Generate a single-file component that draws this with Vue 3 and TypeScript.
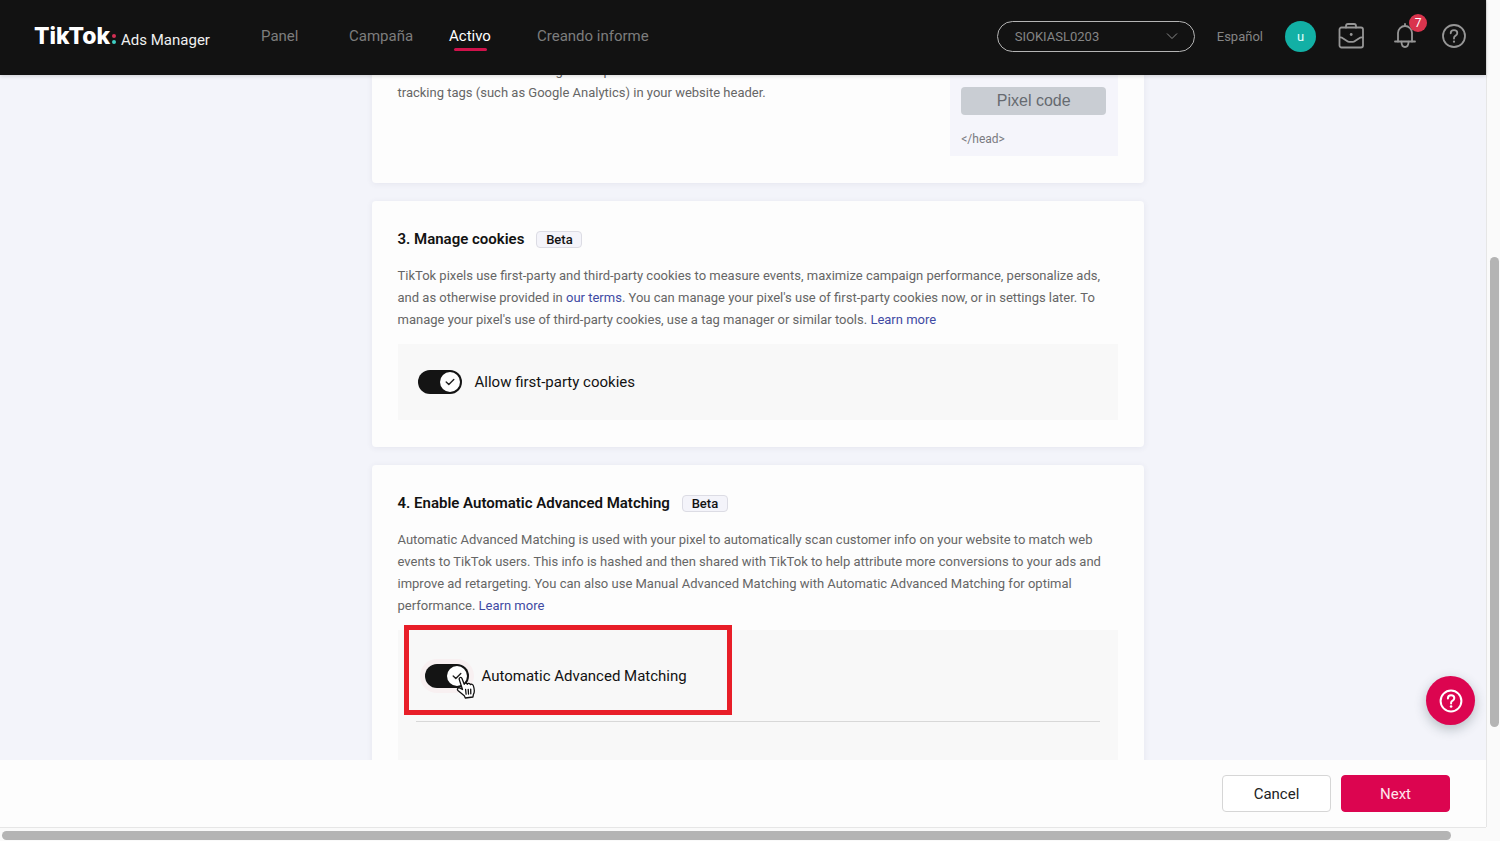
<script setup lang="ts">
import { ref } from 'vue'

interface NavItem {
  label: string
  active?: boolean
}

const nav: NavItem[] = [
  { label: 'Panel' },
  { label: 'Campaña' },
  { label: 'Activo', active: true },
  { label: 'Creando informe' },
]

const account = ref('SIOKIASL0203')
const notifications = ref(7)
const firstParty = ref(true)
const advancedMatching = ref(true)
</script>

<template>
  <div class="window">
    <div class="page">
      <header class="topbar">
        <a class="brand" href="#">
          <span class="brand-name">TikTok</span>
          <span class="brand-dots"><i class="dot red"></i><i class="dot teal"></i></span>
          <span class="brand-sub">Ads Manager</span>
        </a>
        <nav class="nav">
          <a v-for="item in nav" :key="item.label" href="#" :class="{ active: item.active }">{{ item.label }}</a>
        </nav>
        <div class="tools">
          <div class="account">
            <select v-model="account" aria-label="Account">
              <option>SIOKIASL0203</option>
            </select>
            <svg class="chevron" width="12" height="8" viewBox="0 0 12 8" fill="none" stroke="#8a8a8a" stroke-width="1">
              <path d="M1 1.5l5 5 5-5" />
            </svg>
          </div>
          <button class="lang" type="button">Español</button>
          <button class="avatar" type="button">u</button>
          <button class="icon" type="button" aria-label="Business">
            <svg width="26" height="26" viewBox="0 0 26 26" fill="none" stroke="#969696" stroke-width="1.8" stroke-linejoin="round" stroke-linecap="round">
              <rect x="1.500" y="4.500" width="23.500" height="20" rx="2" />
              <path d="M8 4.500V3q0-2 2-2h6q2 0 2 2v1.500" />
              <path d="M1.800 14.500q1.700-.3 3.400 1l3.800 2.600q1 .7 2.200.7h3.600q1.200 0 2.200-.7l3.800-2.600q1.700-1.300 3.800-1" />
              <circle cx="13.200" cy="11.500" r="1.400" fill="#969696" stroke="none" />
            </svg>
          </button>
          <button class="icon bell" type="button" aria-label="Notifications">
            <svg width="30" height="26" viewBox="0 0 30 26" fill="none" stroke="#969696" stroke-width="1.800" stroke-linejoin="round" stroke-linecap="round">
              <path d="M15 1v2" />
              <path d="M8 18.500V10a7 7 0 0 1 14 0v8.500" />
              <path d="M5 18.500h20" />
              <path d="M11.500 18.700q0 5.300 3.500 5.300t3.500-5.300" />
            </svg>
            <span class="count">{{ notifications }}</span>
          </button>
          <button class="icon" type="button" aria-label="Help">
            <svg width="24" height="24" viewBox="0 0 24 24" fill="none" stroke="#969696" stroke-width="1.800" stroke-linecap="round">
              <circle cx="12" cy="12" r="11" />
              <path d="M8.700 9.300q0-3.100 3.300-3.100t3.300 2.800q0 1.700-1.700 2.600T12 13.900v.7" />
              <circle cx="12" cy="17.700" r="1.100" fill="#969696" stroke="none" />
            </svg>
          </button>
        </div>
      </header>

      <main class="content">
        <div class="cards">
          <section class="card first">
            <p class="desc">
              Add the code before existing or template<br />
              tracking tags (such as Google Analytics) in your website header.
            </p>
            <div class="snippet">
              <div class="chip">Pixel code</div>
              <code>&lt;/head&gt;</code>
            </div>
          </section>

          <section class="card">
            <h2>3. Manage cookies <span class="beta">Beta</span></h2>
            <p class="desc">
              TikTok pixels use first-party and third-party cookies to measure events, maximize campaign performance, personalize ads,<br />
              and as otherwise provided in <a href="#">our terms</a>. You can manage your pixel's use of first-party cookies now, or in settings later. To<br />
              manage your pixel's use of third-party cookies, use a tag manager or similar tools. <a href="#">Learn more</a>
            </p>
            <div class="panel">
              <label class="switch-row">
                <span class="switch">
                  <input v-model="firstParty" type="checkbox" />
                  <svg width="10" height="8" viewBox="0 0 10 8" fill="none" stroke="#222" stroke-width="1.400" stroke-linecap="round" stroke-linejoin="round"><path d="M1.200 4l2.600 2.500L8.800 1.500" /></svg>
                </span>
                Allow first-party cookies
              </label>
            </div>
          </section>

          <section class="card last">
            <h2>4. Enable Automatic Advanced Matching <span class="beta">Beta</span></h2>
            <p class="desc">
              Automatic Advanced Matching is used with your pixel to automatically scan customer info on your website to match web<br />
              events to TikTok users. This info is hashed and then shared with TikTok to help attribute more conversions to your ads and<br />
              improve ad retargeting. You can also use Manual Advanced Matching with Automatic Advanced Matching for optimal<br />
              performance. <a href="#">Learn more</a>
            </p>
            <div class="panel tall">
              <div class="option">
                <label class="switch-row">
                  <span class="switch hovered">
                    <input v-model="advancedMatching" type="checkbox" />
                    <svg width="10" height="8" viewBox="0 0 10 8" fill="none" stroke="#222" stroke-width="1.400" stroke-linecap="round" stroke-linejoin="round"><path d="M1.200 4l2.600 2.500L8.800 1.500" /></svg>
                  </span>
                  Automatic Advanced Matching
                </label>
                <div class="highlight"></div>
                <svg class="pointer" width="20" height="23" viewBox="0 0 20 23" fill="#fff" stroke="#111" stroke-width="1.300" stroke-linejoin="round" stroke-linecap="round">
                  <path d="M6.500 13.500L3.300 3.600C2.700 1.300 5.300.6 6.100 2.700L8.200 8.300C8.600 6.800 10.700 6.800 11.300 8.300C11.900 7 13.900 7.200 14.300 8.700C15.300 7.800 16.900 8.200 17.300 9.600C18.500 13 19 15.500 17.500 18.200L16.900 21L9.300 22L8.300 19.800L2.200 14.700C.4 13 2.200 11 4.100 12.200Z" />
                  <path d="M9.600 13.500l.5 4.700M12.200 13.300l.3 4.700M14.700 13.100l.1 4.700" />
                </svg>
              </div>
            </div>
          </section>
        </div>

        <button class="float-help" type="button" aria-label="Support">
          <svg width="24" height="24" viewBox="0 0 24 24" fill="none" stroke="#fff" stroke-width="2" stroke-linecap="round">
            <circle cx="12" cy="12" r="10.400" />
            <path d="M8.900 9.500q0-3.200 3.200-3.200t3.200 2.800q0 1.600-1.600 2.500T12.100 13.700v.8" />
            <circle cx="12.100" cy="17.500" r="1.300" fill="#fff" stroke="none" />
          </svg>
        </button>
      </main>

      <footer class="actions">
        <button class="btn" type="button">Cancel</button>
        <button class="btn primary" type="button">Next</button>
      </footer>
    </div>
    <div class="track-y"><div class="thumb-y"></div></div>
    <div class="track-x"><div class="thumb-x"></div></div>
  </div>
</template>

<style>
body {
  margin: 0;
  overflow: hidden;
}
</style>

<style scoped>
* {
  box-sizing: border-box;
}

.window {
  display: grid;
  grid-template-columns: minmax(0, 1fr) 14px;
  grid-template-rows: minmax(0, 1fr) 14px;
  height: 100vh;
  background: #fafafa;
  font-family: Roboto, "Liberation Sans", sans-serif;
  font-size: 15px;
  color: #121212;
}

.page {
  display: flex;
  flex-direction: column;
  min-height: 0;
}

button,
select {
  font-family: inherit;
  cursor: pointer;
}

a {
  text-decoration: none;
}

/* Top bar */
.topbar {
  flex: none;
  position: relative;
  z-index: 1;
  display: flex;
  align-items: center;
  height: 75px;
  padding: 0 20px 3px 34px;
  background: #121212;
  box-shadow: 0 1px 4px rgba(0, 0, 0, 0.16);
}

.brand {
  display: flex;
  align-items: center;
  width: 227px;
  color: #fff;
}

.brand-name {
  font: 800 23px/30px Inter, sans-serif;
}

.brand-dots {
  display: grid;
  gap: 2px;
  margin: 5px 5px 0 2px;
}

.dot {
  width: 4px;
  height: 4px;
  border-radius: 50%;
}

.red {
  background: #d32f53;
}

.teal {
  background: #3fd0c4;
}

.brand-sub {
  padding-top: 8px;
  color: #f0f0f0;
  line-height: 20px;
  white-space: nowrap;
}

.nav {
  display: grid;
  grid-template-columns: 88px 100px 88px auto;
}

.nav a {
  position: relative;
  justify-self: start;
  line-height: 24px;
  color: #7d7d7d;
}

.nav .active {
  color: #fff;
}

.nav .active::after {
  content: "";
  position: absolute;
  left: 5px;
  right: 4px;
  bottom: -3px;
  height: 3px;
  border-radius: 2px;
  background: #d0124b;
}

.tools {
  display: flex;
  align-items: center;
  gap: 22px;
  margin-left: auto;
}

.account {
  display: grid;
  align-items: center;
}

.account > * {
  grid-area: 1 / 1;
}

.account select {
  width: 198px;
  height: 31px;
  padding: 0 17px;
  appearance: none;
  border: 1px solid #b4b4b4;
  border-radius: 16px;
  background: transparent;
  color: #858585;
  font-size: 13px;
}

.chevron {
  justify-self: end;
  margin-right: 17px;
  pointer-events: none;
}

.tools button {
  padding: 0;
  border: 0;
  background: none;
}

.tools .lang {
  color: #858585;
  font-size: 13px;
}

.tools .avatar {
  width: 31px;
  height: 31px;
  border-radius: 50%;
  background: #12b0a5;
  color: #e6fffc;
  font-size: 13px;
}

.icon {
  display: flex;
}

.bell {
  position: relative;
  justify-content: flex-end;
  width: 34px;
}

.count {
  position: absolute;
  top: -9px;
  right: -7px;
  width: 18px;
  height: 18px;
  border-radius: 50%;
  background: #d9344d;
  color: #fff;
  font-size: 12px;
  line-height: 18px;
}

/* Scrolled content */
.content {
  flex: 1;
  position: relative;
  min-height: 0;
  overflow: hidden;
  background: #f3f4fa;
}

.cards {
  display: flex;
  flex-direction: column;
  gap: 18px;
  width: 52%;
  min-width: 772px;
  margin: -15px 0 0 25%;
}

.card {
  padding: 27px 26px;
  border-radius: 4px;
  background: #fdfdfd;
  box-shadow: 0 1px 6px rgba(60, 60, 100, 0.08);
}

.first {
  display: flex;
  justify-content: space-between;
  padding-top: 0;
}

h2 {
  display: flex;
  align-items: center;
  gap: 12px;
  margin: 0 0 15px;
  font-size: 15px;
  font-weight: 600;
  line-height: 22px;
}

.beta {
  width: 46px;
  border: 1px solid #dcdce4;
  border-radius: 4px;
  background: #f4f4fa;
  font-size: 13px;
  font-weight: 500;
  line-height: 15px;
  text-align: center;
}

.desc {
  margin: 0;
  font-size: 13px;
  line-height: 22px;
  color: #666;
  white-space: nowrap;
}

.desc a {
  color: #3f4aa3;
}

.snippet {
  width: 168px;
  padding: 27px 12px 6px 11px;
  background: #f5f5fb;
}

.chip {
  margin-bottom: 13px;
  border-radius: 4px;
  background: #c9cdd3;
  color: #666a70;
  font: 400 16px/28px "Liberation Sans", Arial, sans-serif;
  text-align: center;
}

.snippet code {
  display: block;
  color: #7a7a80;
  font: 12px/22px Roboto, sans-serif;
}

.panel {
  margin-top: 13px;
  padding: 0 18px;
  background: #f8f8f8;
}

.switch-row {
  display: flex;
  align-items: center;
  gap: 13px;
  height: 76px;
  padding-left: 2px;
}

.switch {
  display: grid;
  align-items: center;
  border-radius: 12px;
}

.switch > * {
  grid-area: 1 / 1;
}

.switch input {
  display: flex;
  align-items: center;
  justify-content: flex-start;
  width: 44px;
  height: 24px;
  margin: 0;
  padding: 2px;
  appearance: none;
  border-radius: 12px;
  background: #aaa;
}

.switch input::before {
  content: "";
  width: 20px;
  height: 20px;
  border-radius: 50%;
  background: #fff;
}

.switch input:checked {
  justify-content: flex-end;
  background: #141414;
}

.switch svg {
  z-index: 1;
  justify-self: end;
  margin-right: 7px;
  pointer-events: none;
}

.hovered {
  box-shadow: 0 0 0 5px rgba(254, 44, 85, 0.04);
}

.tall {
  height: 180px;
}

.option {
  position: relative;
  border-bottom: 1px solid #d8d8d8;
}

.option .switch-row {
  height: 91px;
  padding-left: 9px;
}

.highlight {
  position: absolute;
  top: -5px;
  left: -12px;
  width: 328px;
  height: 90px;
  border: 5px solid #e81e28;
  pointer-events: none;
}

.pointer {
  position: absolute;
  top: 46px;
  left: 40px;
  z-index: 2;
  pointer-events: none;
}

.float-help {
  position: absolute;
  right: 11px;
  bottom: 35px;
  display: grid;
  place-items: center;
  width: 49px;
  height: 49px;
  padding: 0;
  border: 0;
  border-radius: 50%;
  background: #dc0550;
  box-shadow: 0 4px 12px rgba(40, 60, 70, 0.3);
}

/* Footer */
.actions {
  flex: none;
  display: flex;
  justify-content: flex-end;
  gap: 10px;
  padding: 15px 36px 15px 0;
  background: #fdfdfd;
}

.btn {
  width: 109px;
  height: 37px;
  border: 1px solid #d6d6d6;
  border-radius: 4px;
  background: #fff;
  color: #222;
  font-size: 15px;
}

.primary {
  border-color: #dc0550;
  background: #dc0550;
  color: #ffe6ee;
}

/* Scroll tracks */
.track-y {
  display: grid;
  grid-template-rows: 257fr 470fr 100fr;
  padding: 0 1px 0 3px;
  border-left: 1px solid #e6e6e6;
}

.thumb-y {
  grid-row: 2;
  border-radius: 5px;
  background: #b4b4b4;
}

.track-x {
  grid-column: 1;
  padding: 3px 35px 1px 2px;
  border-top: 1px solid #e6e6e6;
}

.thumb-x {
  height: 9px;
  border-radius: 5px;
  background: #b4b4b4;
}
</style>
